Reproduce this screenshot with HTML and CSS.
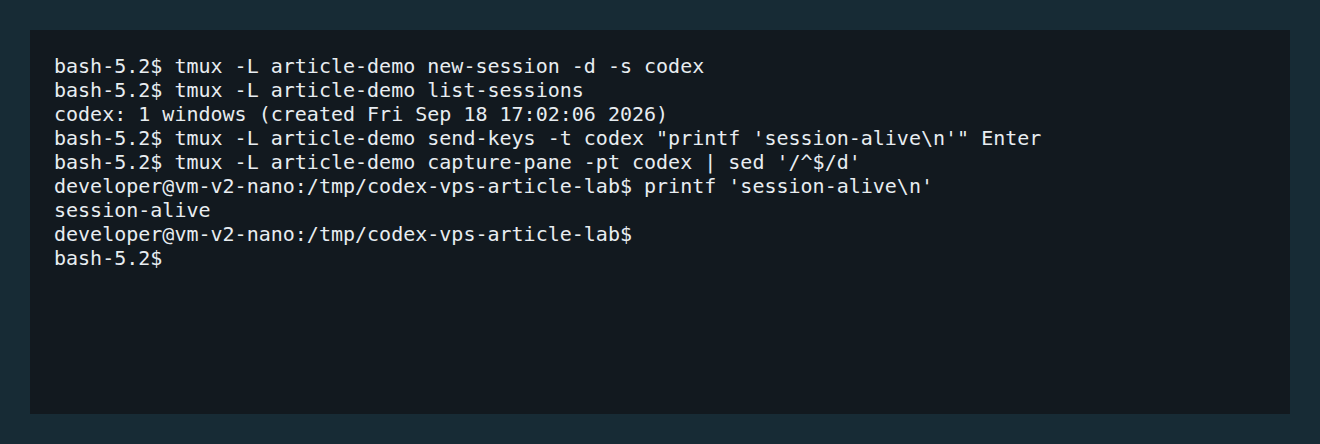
FILE: index.html
```html
<!DOCTYPE html>
<html>
<head>
<meta charset="utf-8">
<link rel="stylesheet" href="styles.css">
</head>
<body>
<div class="page">
<pre class="terminal">bash-5.2$ tmux -L article-demo new-session -d -s codex
bash-5.2$ tmux -L article-demo list-sessions
codex: 1 windows (created Fri Sep 18 17:02:06 2026)
bash-5.2$ tmux -L article-demo send-keys -t codex "printf 'session-alive\n'" Enter
bash-5.2$ tmux -L article-demo capture-pane -pt codex | sed '/^$/d'
developer@vm-v2-nano:/tmp/codex-vps-article-lab$ printf 'session-alive\n'
session-alive
developer@vm-v2-nano:/tmp/codex-vps-article-lab$
bash-5.2$</pre>
</div>
</body>
</html>
```
FILE: styles.css
```css
html, body {
  margin: 0;
  padding: 0;
  background: #172b35;
}
.page {
  padding: 30px;
  width: 1320px;
  height: 444px;
  box-sizing: border-box;
}
.terminal {
  margin: 0;
  box-sizing: border-box;
  height: 384px;
  background: #12191f;
  color: #e8edf1;
  font-family: "DejaVu Sans Mono", monospace;
  font-size: 20px;
  line-height: 24px;
  padding: 24px 24px;
  white-space: pre;
}
```
